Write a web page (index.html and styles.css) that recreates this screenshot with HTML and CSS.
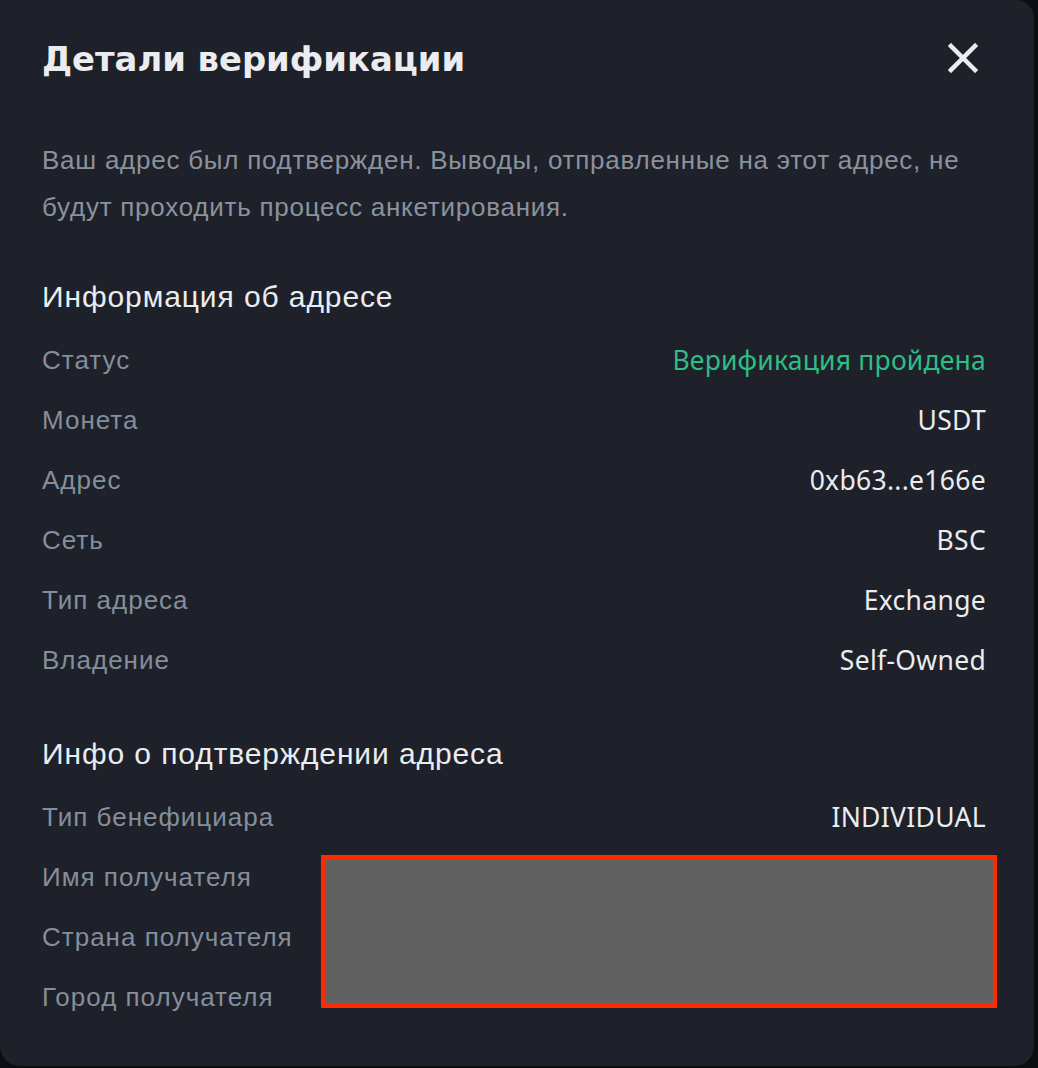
FILE: index.html
```html
<!DOCTYPE html>
<html lang="ru">
<head>
<meta charset="utf-8">
<title>Детали верификации</title>
<link rel="stylesheet" href="styles.css">
</head>
<body>
<div class="modal">
  <div class="header">
    <h1 class="title">Детали верификации</h1>
    <button class="close" aria-label="Закрыть">
      <svg width="30" height="30" viewBox="0 0 30 30"><path d="M3 3 L27 27 M27 3 L3 27" stroke="#eaecef" stroke-width="4.5" stroke-linecap="square"/></svg>
    </button>
  </div>
  <p class="desc">Ваш адрес был подтвержден. Выводы, отправленные на этот адрес, не будут проходить процесс анкетирования.</p>

  <h2 class="section">Информация об адресе</h2>
  <div class="rows">
    <div class="row"><span class="label">Статус</span><span class="value ok">Верификация пройдена</span></div>
    <div class="row"><span class="label">Монета</span><span class="value">USDT</span></div>
    <div class="row"><span class="label">Адрес</span><span class="value">0xb63...e166e</span></div>
    <div class="row"><span class="label">Сеть</span><span class="value">BSC</span></div>
    <div class="row"><span class="label">Тип адреса</span><span class="value">Exchange</span></div>
    <div class="row"><span class="label">Владение</span><span class="value">Self-Owned</span></div>
  </div>

  <h2 class="section second">Инфо о подтверждении адреса</h2>
  <div class="rows redacted-area">
    <div class="row"><span class="label">Тип бенефициара</span><span class="value">INDIVIDUAL</span></div>
    <div class="row"><span class="label">Имя получателя</span><span class="value"></span></div>
    <div class="row"><span class="label">Страна получателя</span><span class="value"></span></div>
    <div class="row"><span class="label">Город получателя</span><span class="value"></span></div>
    <div class="redaction"></div>
  </div>
</div>
</body>
</html>
```

FILE: styles.css
```css
html, body {
  margin: 0;
  padding: 0;
  background: #0b0e11;
}

.modal {
  box-sizing: border-box;
  width: 1034px;
  height: 1066px;
  background: #1e2129;
  border-radius: 0 18px 20px 20px;
  padding: 40px 48px 0 42px;
  font-family: "Liberation Sans", Arial, sans-serif;
  color: #eaecef;
}

.header {
  display: flex;
  align-items: center;
  justify-content: space-between;
  height: 40px;
}

.title {
  margin: 0;
  font-family: "DejaVu Sans", "Liberation Sans", sans-serif;
  font-size: 33.8px;
  line-height: 40px;
  font-weight: 700;
  letter-spacing: 0;
  color: #eaecef;
}

.close {
  background: none;
  border: 0;
  padding: 0;
  width: 30px;
  height: 30px;
  margin-right: 8px;
  margin-top: -4px;
  display: flex;
}

.desc {
  margin: 57px 0 0 0;
  font-size: 26px;
  line-height: 47px;
  letter-spacing: 0.75px;
  color: #8a929e;
}

.section {
  margin: 48px 0 0 0;
  font-size: 30px;
  line-height: 36px;
  font-weight: 400;
  letter-spacing: 0.9px;
  color: #eaecef;
}

.section.second {
  margin-top: 46px;
}

.rows {
  margin-top: 15px;
  display: flex;
  flex-direction: column;
}

.redacted-area {
  position: relative;
}

.row {
  display: flex;
  justify-content: space-between;
  align-items: center;
  height: 60px;
}

.label {
  font-size: 26px;
  letter-spacing: 1px;
  color: #848e9c;
}

.value {
  font-family: "Noto Sans", "Open Sans", sans-serif;
  font-size: 26.5px;
  letter-spacing: 0.3px;
  color: #eaecef;
}

.value.ok {
  color: #2ebd85;
  letter-spacing: 0.2px;
}

.redaction {
  position: absolute;
  left: 279px;
  top: 68px;
  width: 668px;
  height: 145px;
  background: #616161;
  border: 4px solid #ff2a00;
}
```
